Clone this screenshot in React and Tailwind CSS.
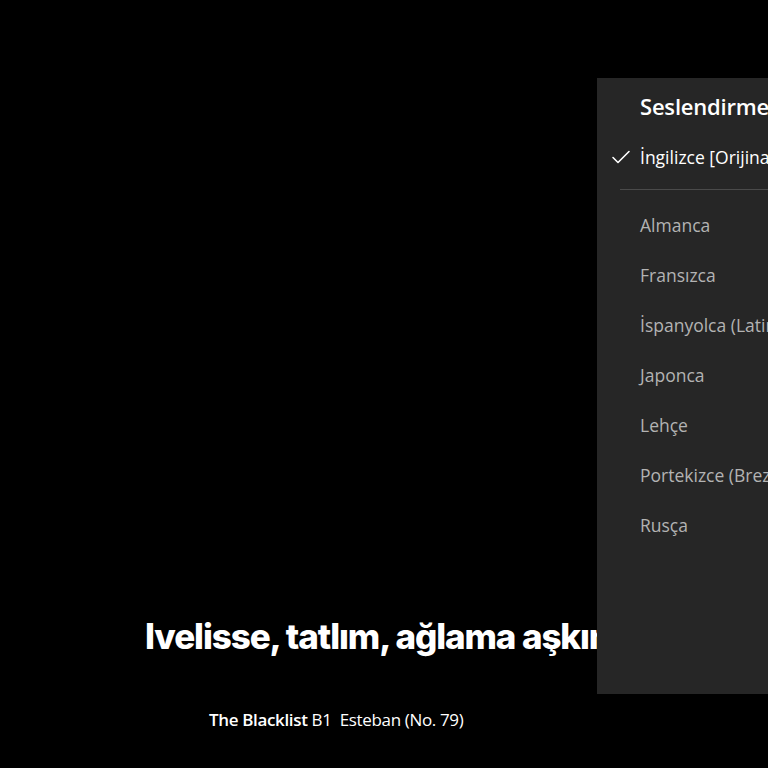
const languages = [
  "Almanca",
  "Fransızca",
  "İspanyolca (Latin Amerika)",
  "Japonca",
  "Lehçe",
  "Portekizce (Brezilya)",
  "Rusça",
];

const CheckIcon = () => (
  <svg width="20" height="20" viewBox="0 0 20 20" fill="none" stroke="white" strokeWidth="1.6" strokeLinecap="round" strokeLinejoin="round">
    <path d="M2 10.5 L7 15.5 L18 4.5" />
  </svg>
);

const AudioPanel = () => (
  <div className="absolute left-[597px] top-[78px] w-[340px] h-[616px] bg-[#262626] font-['Open_Sans',sans-serif]">
    <div className="pl-[43px] pt-[13px] text-[22px] font-semibold text-white leading-[30px] tracking-[-0.2px]">
      Seslendirme
    </div>
    <div className="flex items-center h-[30px] mt-[21px] pl-[14px] gap-[9px]">
      <CheckIcon />
      <span className="text-[17.5px] text-white">İngilizce [Orijinal]</span>
    </div>
    <div className="ml-[23px] mt-[17px] h-px bg-[#4a4a4a]" />
    <ul className="pl-[43px] pt-[20px] flex flex-col">
      {languages.map((l) => (
        <li key={l} className="h-[50px] leading-[30px] text-[17.5px] text-[#b3b3b3]">
          {l}
        </li>
      ))}
    </ul>
  </div>
);

export default function App() {
  return (
    <div className="relative w-[768px] h-[768px] bg-black overflow-hidden">
      <div className="flex flex-col h-full">
        <div className="pt-[612px] pl-[145px] whitespace-nowrap text-[35px] font-extrabold text-white font-['Inter',sans-serif] leading-[48px] tracking-[-1.1px]">
          Ivelisse, tatlım, ağlama aşkım.
        </div>
        <div className="pt-[48px] pl-[209px] whitespace-nowrap text-[17px] text-white font-['Open_Sans',sans-serif] leading-[24px] tracking-[-0.35px]">
          <span className="font-semibold">The Blacklist</span> B1&nbsp;&nbsp;Esteban (No. 79)
        </div>
      </div>
      <AudioPanel />
    </div>
  );
}
